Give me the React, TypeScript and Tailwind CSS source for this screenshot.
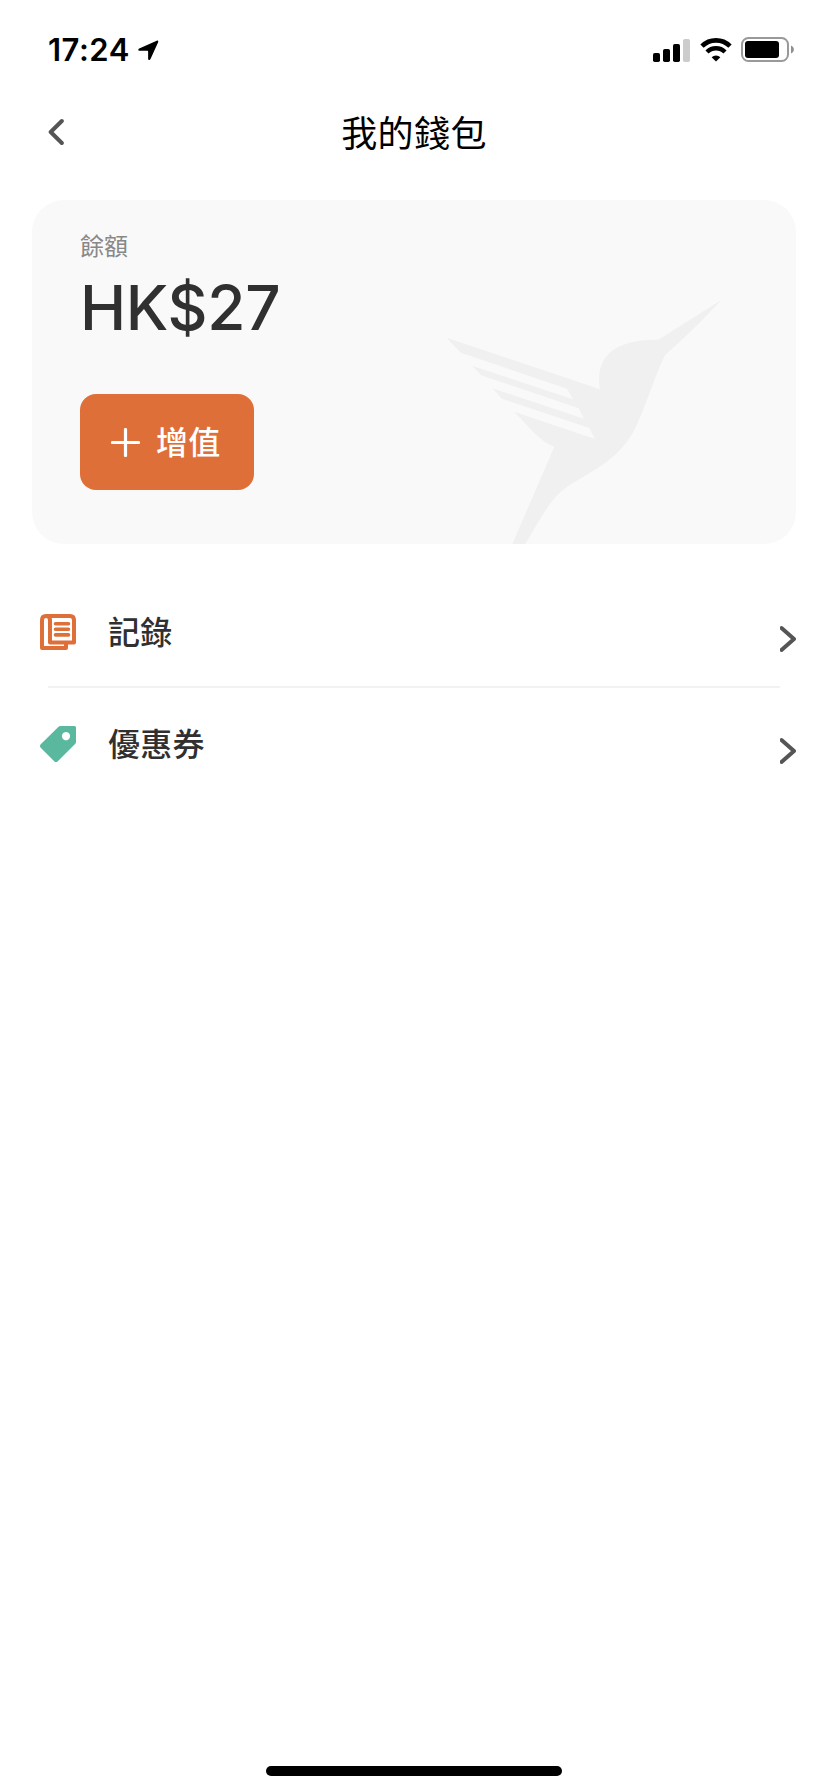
import React from "react";

const cjk = "font-['Inter','Noto_Sans_CJK_TC',sans-serif]";

function StatusBar() {
  return (
    <div className="flex h-22 items-center justify-between pt-3 pr-[34px] pl-12">
      <div className="flex items-center gap-2">
        <span className="text-[31px] leading-9 font-semibold tracking-[0.5px]">17:24</span>
        <svg width="21" height="21" viewBox="0 0 22 22" className="fill-black">
          <path d="M19.600.7 1.300 8.900C-.3 9.600.2 11.300 1.700 11.300h8.200c.5 0 .7.2.7.7v7.600c0 1.700 1.800 2 2.500.4L21.100 2.300c.5-1.200-.3-2.100-1.500-1.600Z" />
        </svg>
      </div>
      <div className="flex items-center">
        <svg width="37" height="23" viewBox="0 0 37 23">
          <rect x="0" y="14" width="7" height="9" rx="1.800" />
          <rect x="10" y="10" width="7" height="13" rx="1.800" />
          <rect x="20" y="5" width="7" height="18" rx="1.800" />
          <rect x="30" y="0" width="7" height="23" rx="1.800" fill="#cccccc" />
        </svg>
        <svg width="32" height="24" viewBox="0 0 32 24" className="ml-[10px]" fill="none" stroke="black">
          <path d="M2 8.200a19.800 19.800 0 0 1 28 0" strokeWidth="4.600" />
          <path d="M7 14a12.600 12.600 0 0 1 18 0" strokeWidth="4.400" />
          <path d="M16 23.500 11.600 19.200a6.400 6.400 0 0 1 8.800 0Z" fill="black" stroke="none" />
        </svg>
        <svg width="53" height="26" viewBox="0 0 53 26" className="ml-[9px]">
          <rect x="1" y="1" width="46" height="23" rx="6.500" fill="none" stroke="#999999" strokeWidth="2" />
          <rect x="4" y="4" width="34" height="17" rx="3" />
          <path d="M50 8.500c3.800 1.500 3.800 6.500 0 8Z" fill="#8f8f8f" />
        </svg>
      </div>
    </div>
  );
}

function Header() {
  return (
    <header className="grid h-22 grid-cols-[1fr_auto_1fr] items-center px-12">
      <svg width="18" height="28" viewBox="0 0 18 28" fill="none" stroke="#555555" strokeWidth="4" strokeLinecap="round" strokeLinejoin="round">
        <path d="M13.800 3 2.700 14l11.100 11" />
      </svg>
      <h1 className="pt-1 text-[36px] leading-none tracking-[0.4px]">我的錢包</h1>
      <span />
    </header>
  );
}

function Bird() {
  return (
    <svg width="310" height="263" viewBox="0 0 930 789" className="absolute right-[56px] bottom-0" fill="#f0f0f0">
      <path d="M50 170 510 325C492 218 565 175 685 176L874 57C820 116 762 173 705 222C672 290 640 400 608 456C565 528 515 555 425 608C370 642 350 680 286 789H247L373 497C332 482 310 450 252 392L495 474 478 441 216 353 187 322 462 413 446 382 154 283 126 254 429 355 411 323 92 215Z" />
    </svg>
  );
}

function BalanceCard() {
  return (
    <section className="relative mx-8 mt-6 flex h-[344px] flex-col items-start overflow-hidden rounded-[32px] bg-[#f9f9f9] px-12 pt-[35px]">
      <Bird />
      <div className="text-[24px] leading-6 text-[#888888]">餘額</div>
      <div className="mt-[13px] text-[62px] leading-[72px] font-medium tracking-[-0.3px] text-[#303030]">HK$27</div>
      <button className="mt-[50px] flex h-24 w-[174px] items-center rounded-2xl bg-[#df6f38] pl-[31px] text-white">
        <svg width="29" height="29" viewBox="0 0 29 29" stroke="white" strokeWidth="3.200" strokeLinecap="round">
          <path d="M1.500 14.500h26M14.500 1.500v26" />
        </svg>
        <span className="ml-4 pt-[2px] text-[32px] leading-none font-medium tracking-[0.3px]">增值</span>
      </button>
    </section>
  );
}

function RecordIcon() {
  return (
    <svg width="36" height="36" viewBox="0 0 36 36" fill="none" stroke="#df6f38">
      <path d="M26 32.500V34H2V6Q2 2 6 2H30Q34 2 34 6V28.500H10V6Q10 2 6 2" strokeWidth="4" strokeLinejoin="round" />
      <path d="M26 29v5" strokeWidth="4" />
      <path d="M15.500 9.700h13M15.500 15.200h13M15.500 20.900h13" strokeWidth="3.600" strokeLinecap="round" />
    </svg>
  );
}

function TagIcon() {
  return (
    <svg width="36" height="36" viewBox="0 0 36 36" fill="#59b89e">
      <path fillRule="evenodd" d="M20.500 0H34.500Q36 0 36 1.500V16Q36 17 35.300 17.700L17.500 35.500Q16 36.500 14.500 35.500L.5 21.500Q-.5 20 .5 18.500L18.300.9Q19.200 0 20.500 0ZM26 6a4.100 4.100 0 1 0 .01 0Z" />
    </svg>
  );
}

function Row({ icon, label, divider }: { icon: React.ReactNode; label: string; divider?: boolean }) {
  return (
    <div>
      <div className={divider ? "flex h-[110px] items-center pt-[2px] pr-8 pl-10" : "flex h-[112px] items-center pr-8 pl-10"}>
        {icon}
        <span className="ml-8 flex-1 pt-[2px] text-[32px] leading-none font-medium tracking-[0.3px] text-[#303030]">{label}</span>
        <svg width="16" height="28" viewBox="0 0 16 28" className="mt-[14px]" fill="none" stroke="#555555" strokeWidth="4" strokeLinecap="round" strokeLinejoin="round">
          <path d="M1.500 3 14 14 1.500 25" />
        </svg>
      </div>
      {divider && <div className="mx-12 h-[2px] bg-[#f2f2f2]" />}
    </div>
  );
}

export default function App() {
  return (
    <div className={`flex h-[1792px] w-[828px] flex-col bg-white text-black ${cjk}`} lang="zh-Hant">
      <StatusBar />
      <Header />
      <BalanceCard />
      <main className="mt-8 flex-1">
        <Row icon={<RecordIcon />} label="記錄" divider />
        <Row icon={<TagIcon />} label="優惠券" />
      </main>
      <div className="mx-auto mb-4 h-[10px] w-[296px] rounded-full bg-black" />
    </div>
  );
}
